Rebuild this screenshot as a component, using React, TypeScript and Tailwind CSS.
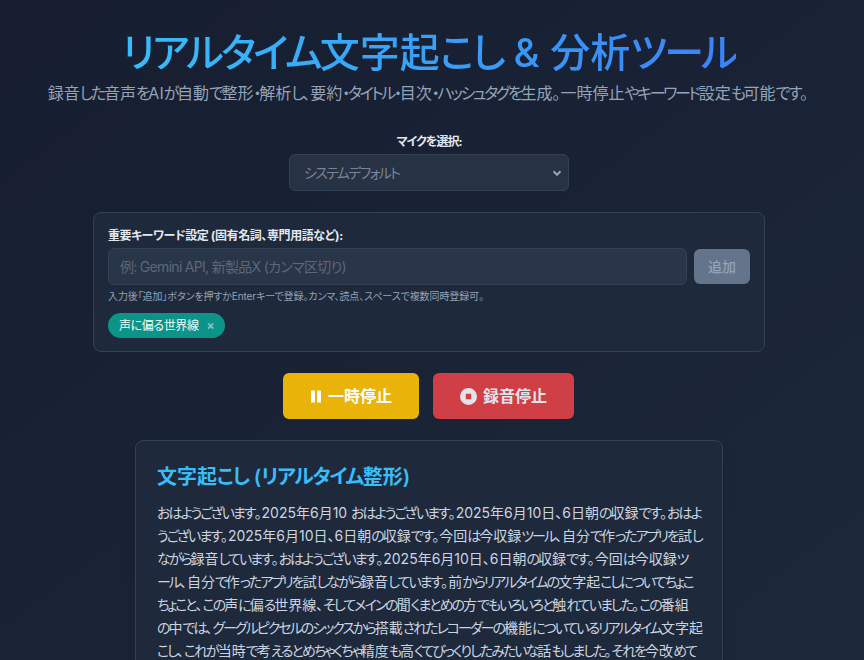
const jp = "font-['Inter','Noto_Sans_CJK_JP',sans-serif] [font-feature-settings:'palt']";

const lines = [
  "おはようございます。2025年6月10 おはようございます。2025年6月10日、6日朝の収録です。おはよ",
  "うございます。2025年6月10日、6日朝の収録です。今回は今収録ツール、自分で作ったアプリを試し",
  "ながら録音しています。おはようございます。2025年6月10日、6日朝の収録です。今回は今収録ツ",
  "ール、自分で作ったアプリを試しながら録音しています。前からリアルタイムの文字起こしについてちょこ",
  "ちょこと、この声に偏る世界線、そしてメインの聞くまとめの方でもいろいろと触れていました。この番組",
  "の中では、グーグルピクセルのシックスから搭載されたレコーダーの機能についているリアルタイム文字起",
  "こし、これが当時で考えるとめちゃくちゃ精度も高くてびっくりしたみたいな話もしました。それを今改めて",
];

// the reference font sets kana much narrower than kanji, so tighten only the kana runs
function Narrow({ text, kana }: { text: string; kana: string }) {
  return (
    <>
      {text.split(/([\u3040-\u30ff]+)/).map((part, i) =>
        i % 2 === 1 ? <span key={i} className={kana}>{part}</span> : part
      )}
    </>
  );
}

function PauseIcon() {
  return (
    <svg width="12" height="13" viewBox="0 0 12 13" fill="currentColor">
      <rect x="1" y="0.5" width="4" height="12" rx="0.5" />
      <rect x="7" y="0.5" width="4" height="12" rx="0.5" />
    </svg>
  );
}

function StopIcon() {
  return (
    <svg width="17" height="17" viewBox="0 0 17 17" fill="currentColor">
      <path fillRule="evenodd" d="M8.5 0a8.5 8.5 0 1 1 0 17a8.5 8.5 0 0 1 0-17zM5.8 5.8v5.4h5.4V5.8z" />
    </svg>
  );
}

export default function App() {
  return (
    <div className={`${jp} h-[660px] overflow-hidden bg-gradient-to-br from-[#161e30] to-[#1d283b]`}>
      <div className="w-[858px] flex flex-col items-center">
        {/* Header */}
        <h1 className="mt-[25px] text-[40px] leading-[56px] font-medium whitespace-nowrap bg-gradient-to-r from-[#38bdf8] to-[#3b82f6] bg-clip-text text-transparent">
          <Narrow text="リアルタイム文字起こし & 分析ツール" kana="tracking-[-2.7px]" />
        </h1>
        <p className="pr-0.5 text-base leading-6 text-[#94a3b8] whitespace-nowrap">
          <Narrow text="録音した音声をAIが自動で整形・解析し、要約・タイトル・目次・ハッシュタグを生成。一時停止やキーワード設定も可能です。" kana="tracking-[-2.35px]" />
        </p>

        {/* Mic */}
        <label className="mt-[29px] text-xs leading-4 font-bold tracking-[-1px] text-[#e2e8f0]">マイクを選択:</label>
        <div className="mt-1 w-[280px] h-[37px] rounded-md border border-[#334155] bg-[#273245] flex items-center justify-between pl-[14px] pr-[6px]">
          <span className="text-sm tracking-[-1.7px] text-[#7b8494]">システムデフォルト</span>
          <svg width="10" height="10" viewBox="0 0 10 10" fill="none" stroke="#94a3b8" strokeWidth="2">
            <path d="M1.5 3.2L5 6.8L8.5 3.2" />
          </svg>
        </div>

        {/* Keywords */}
        <section className="mt-[21px] w-[672px] h-[140px] rounded-lg border border-[#334155] bg-[#1e293b] px-[14px] pt-[15px]">
          <label className="block text-xs leading-4 font-bold tracking-[-0.4px] text-[#e2e8f0]">重要キーワード設定 (固有名詞、専門用語など):</label>
          <div className="mt-1 flex items-center gap-[7px]">
            <div className="flex-1 h-[37px] rounded-md border border-[#334155] bg-[#293548] px-[11px] flex items-center text-sm tracking-[-0.7px] text-[#5c6779]">
              例: Gemini API, 新製品X (カンマ区切り)
            </div>
            <button className="w-[56px] h-[35px] rounded-md bg-[#64748b] text-sm font-medium text-[#94a3b8]">追加</button>
          </div>
          <p className="mt-1 text-[10px] leading-[15px] tracking-[-0.1px] text-[#94a3b8]">
            入力後「追加」ボタンを押すかEnterキーで登録。カンマ、読点、スペースで複数同時登録可。
          </p>
          <div className="mt-[9px] inline-flex items-center h-[25px] rounded-full bg-[#0d9488] px-[11px] text-xs tracking-[-0.4px] text-[#f0fdfa]">
            声に偏る世界線
            <span className="ml-2 text-xs font-bold text-[#7fc9c1]">×</span>
          </div>
        </section>

        {/* Controls */}
        <div className="mt-[21px] pr-px flex gap-[14px]">
          <button className="w-[136px] h-[46px] rounded-md bg-[#eab308] text-white text-base font-bold flex items-center justify-center gap-[6px]">
            <PauseIcon />
            一時停止
          </button>
          <button className="w-[141px] h-[46px] rounded-md bg-[#cf3f45] text-[#e2e4e9] text-base font-bold flex items-center justify-center gap-[6px]">
            <StopIcon />
            録音停止
          </button>
        </div>

        {/* Transcript */}
        <section className="mt-[21px] w-[588px] rounded-lg border border-[#334155] bg-[#1e293b] px-[21px] pt-[22px] pb-6 shadow-lg">
          <h2 className="text-xl leading-7 font-semibold text-[#38bdf8]">
            <Narrow text="文字起こし (リアルタイム整形)" kana="tracking-[-1.3px]" />
          </h2>
          <div className="mt-[10px] text-sm leading-[23px] text-[#cbd5e1] whitespace-nowrap">
            {lines.map((line) => (
              <p key={line}>
                <Narrow text={line} kana="tracking-[-2px]" />
              </p>
            ))}
          </div>
        </section>
      </div>
    </div>
  );
}
